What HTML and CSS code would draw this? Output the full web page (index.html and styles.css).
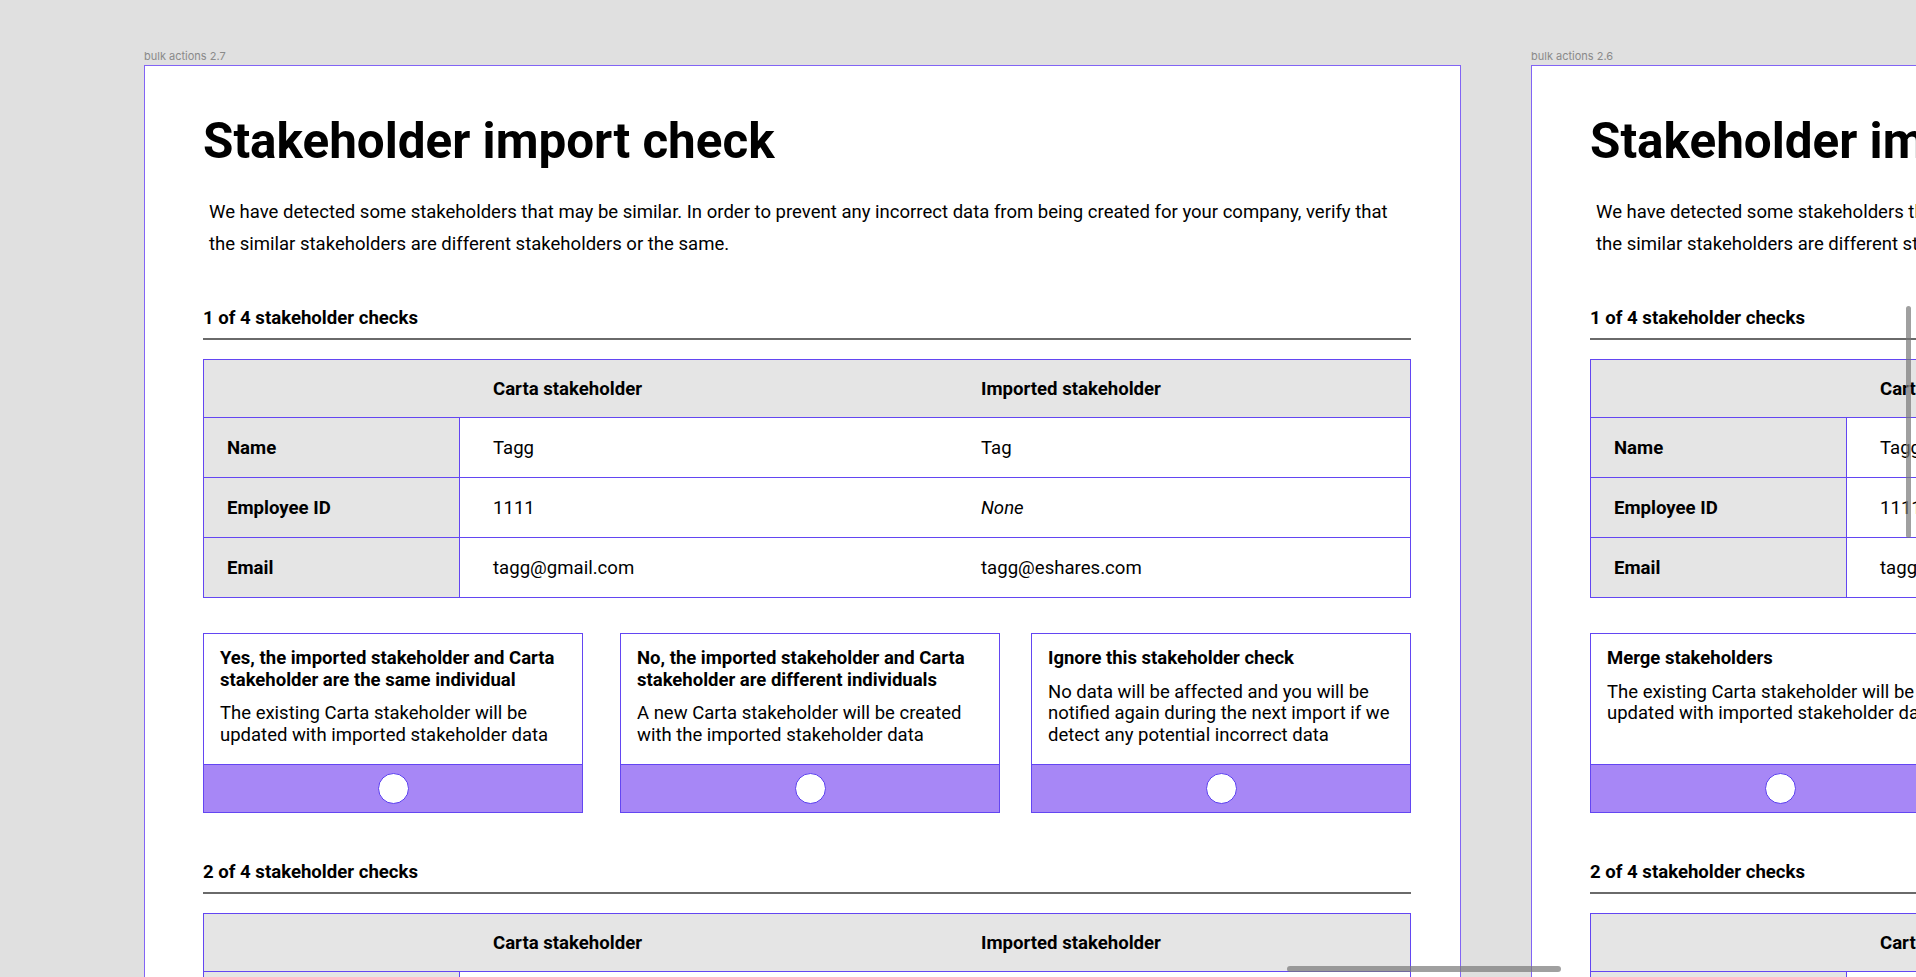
FILE: index.html
```html
<!DOCTYPE html>
<html lang="en">
<head>
<meta charset="utf-8">
<title>Stakeholder import check</title>
<link rel="stylesheet" href="styles.css">
</head>
<body>
<div class="canvas">
  <div class="artboard">
    <div class="artboard-label">bulk actions 2.7</div>
    <div class="frame">
      <h1 class="title">Stakeholder import check</h1>
      <p class="intro">We have detected some stakeholders that may be similar. In order to prevent any incorrect data from being created for your company, verify that the similar stakeholders are different stakeholders or the same.</p>

      <section class="check">
        <h2 class="check-heading">1 of 4 stakeholder checks</h2>
        <div class="compare">
          <div class="compare-head"><span></span><span class="head-cell">Carta stakeholder</span><span class="head-cell">Imported stakeholder</span></div>
          <div class="compare-row"><div class="label">Name</div><div class="val">Tagg</div><div class="val">Tag</div></div>
          <div class="compare-row"><div class="label">Employee ID</div><div class="val">1111</div><div class="val none">None</div></div>
          <div class="compare-row"><div class="label">Email</div><div class="val">tagg@gmail.com</div><div class="val">tagg@eshares.com</div></div>
        </div>
        <div class="options">
          <div class="option">
            <div class="option-body">
              <div class="option-title">Yes, the imported stakeholder and Carta stakeholder are the same individual</div>
              <div class="option-desc">The existing Carta stakeholder will be updated with imported stakeholder data</div>
            </div>
            <div class="option-foot"><span class="radio"></span></div>
          </div>
          <div class="option">
            <div class="option-body">
              <div class="option-title">No, the imported stakeholder and Carta stakeholder are different individuals</div>
              <div class="option-desc">A new Carta stakeholder will be created with the imported stakeholder data</div>
            </div>
            <div class="option-foot"><span class="radio"></span></div>
          </div>
          <div class="option">
            <div class="option-body">
              <div class="option-title">Ignore this stakeholder check</div>
              <div class="option-desc">No data will be affected and you will be notified again during the next import if we detect any potential incorrect data</div>
            </div>
            <div class="option-foot"><span class="radio"></span></div>
          </div>
        </div>
      </section>

      <section class="check">
        <h2 class="check-heading">2 of 4 stakeholder checks</h2>
        <div class="compare">
          <div class="compare-head"><span></span><span class="head-cell">Carta stakeholder</span><span class="head-cell">Imported stakeholder</span></div>
          <div class="compare-row"><div class="label">Name</div><div class="val">Tagg</div><div class="val">Tag</div></div>
          <div class="compare-row"><div class="label">Employee ID</div><div class="val">1111</div><div class="val none">None</div></div>
          <div class="compare-row"><div class="label">Email</div><div class="val">tagg@gmail.com</div><div class="val">tagg@eshares.com</div></div>
        </div>
      </section>
    </div>
  </div>

  <div class="artboard">
    <div class="artboard-label">bulk actions 2.6</div>
    <div class="frame">
      <h1 class="title">Stakeholder import check</h1>
      <p class="intro">We have detected some stakeholders that may be similar. In order to prevent any incorrect data from being created for your company, verify that the similar stakeholders are different stakeholders or the same.</p>

      <section class="check">
        <h2 class="check-heading">1 of 4 stakeholder checks</h2>
        <div class="compare">
          <div class="compare-head"><span></span><span class="head-cell">Carta stakeholder</span><span class="head-cell">Imported stakeholder</span></div>
          <div class="compare-row"><div class="label">Name</div><div class="val">Tagg</div><div class="val">Tag</div></div>
          <div class="compare-row"><div class="label">Employee ID</div><div class="val">1111</div><div class="val none">None</div></div>
          <div class="compare-row"><div class="label">Email</div><div class="val">tagg@gmail.com</div><div class="val">tagg@eshares.com</div></div>
        </div>
        <div class="options">
          <div class="option">
            <div class="option-body">
              <div class="option-title">Merge stakeholders</div>
              <div class="option-desc">The existing Carta stakeholder will be updated with imported stakeholder data</div>
            </div>
            <div class="option-foot"><span class="radio"></span></div>
          </div>
          <div class="option">
            <div class="option-body">
              <div class="option-title">Create new stakeholder</div>
              <div class="option-desc">A new Carta stakeholder will be created with the imported stakeholder data</div>
            </div>
            <div class="option-foot"><span class="radio"></span></div>
          </div>
          <div class="option">
            <div class="option-body">
              <div class="option-title">Ignore this stakeholder check</div>
              <div class="option-desc">No data will be affected and you will be notified again during the next import if we detect any potential incorrect data</div>
            </div>
            <div class="option-foot"><span class="radio"></span></div>
          </div>
        </div>
      </section>

      <section class="check">
        <h2 class="check-heading">2 of 4 stakeholder checks</h2>
        <div class="compare">
          <div class="compare-head"><span></span><span class="head-cell">Carta stakeholder</span><span class="head-cell">Imported stakeholder</span></div>
          <div class="compare-row"><div class="label">Name</div><div class="val">Tagg</div><div class="val">Tag</div></div>
        </div>
      </section>
    </div>
  </div>
</div>

<div class="scroll-v"></div>
<div class="scroll-h"></div>
</body>
</html>
```

FILE: styles.css
```css
* { box-sizing: border-box; }

html, body {
  margin: 0;
  height: 977px;
  overflow: hidden;
  background: #e0e0e0;
}

body {
  font-family: Roboto, "Liberation Sans", sans-serif;
  color: #000;
  position: relative;
}

.canvas {
  display: flex;
  gap: 70px;
  padding: 48px 0 0 144px;
  width: max-content;
}

.artboard {
  display: flex;
  flex-direction: column;
  flex-shrink: 0;
  width: 1317px;
}

.artboard-label {
  font-family: Inter, Roboto, sans-serif;
  font-size: 11px;
  line-height: 17px;
  color: #8a8a8a;
  white-space: nowrap;
}

.frame {
  background: #fff;
  border: 1px solid #8264f5;
  padding: 47px 49px 60px 58px;
}

.title {
  margin: 0;
  font-size: 49.4px;
  line-height: 56px;
  font-weight: 700;
}

.intro {
  margin: 27px 0 0;
  padding: 0 6px;
  font-size: 18.55px;
  line-height: 32px;
  max-width: 1202px;
}

.check { margin-top: 47px; }
.check + .check { margin-top: 48px; }

.check-heading {
  margin: 0;
  font-size: 18.6px;
  line-height: 22px;
  font-weight: 700;
  padding-bottom: 9px;
  border-bottom: 2px solid #6a6a6a;
}

.compare {
  margin-top: 19px;
  border: 1px solid #6346f2;
  font-size: 18.6px;
}

.compare-head,
.compare-row {
  display: grid;
  grid-template-columns: 256px 488px 1fr;
}

.compare-head {
  height: 57px;
  background: #e5e5e5;
  align-items: center;
}

.head-cell {
  padding-left: 33px;
  font-weight: 700;
}

.compare-row {
  height: 60px;
  border-top: 1px solid #6346f2;
}

.compare-row .label {
  background: #e5e5e5;
  border-right: 1px solid #6346f2;
  font-weight: 700;
  padding-left: 23px;
  display: flex;
  align-items: center;
}

.compare-row .val {
  padding-left: 33px;
  display: flex;
  align-items: center;
}

.val.none { font-style: italic; }

.options {
  margin-top: 35px;
  display: grid;
  grid-template-columns: 417px 411px 380px;
}

.option {
  width: 380px;
  border: 1px solid #6346f2;
  display: flex;
  flex-direction: column;
}

.option-body {
  height: 130px;
  padding: 14px 16px 0;
  font-size: 18.5px;
  line-height: 21.6px;
}

.option-title { font-weight: 700; }

.option-desc { margin-top: 12px; }

.option-foot {
  height: 48px;
  border-top: 1px solid #6346f2;
  background: #a787f6;
  display: flex;
  align-items: center;
  justify-content: center;
}

.radio {
  width: 31px;
  height: 31px;
  border-radius: 50%;
  background: #fff;
  border: 1.5px solid #5a3ef0;
}

.scroll-v {
  position: absolute;
  left: 1906px;
  top: 306px;
  width: 5px;
  height: 232px;
  border-radius: 3px;
  background: rgba(120, 120, 120, 0.7);
}

.scroll-h {
  position: absolute;
  left: 1287px;
  top: 966px;
  width: 274px;
  height: 6px;
  border-radius: 3px;
  background: rgba(120, 120, 120, 0.7);
}
```
